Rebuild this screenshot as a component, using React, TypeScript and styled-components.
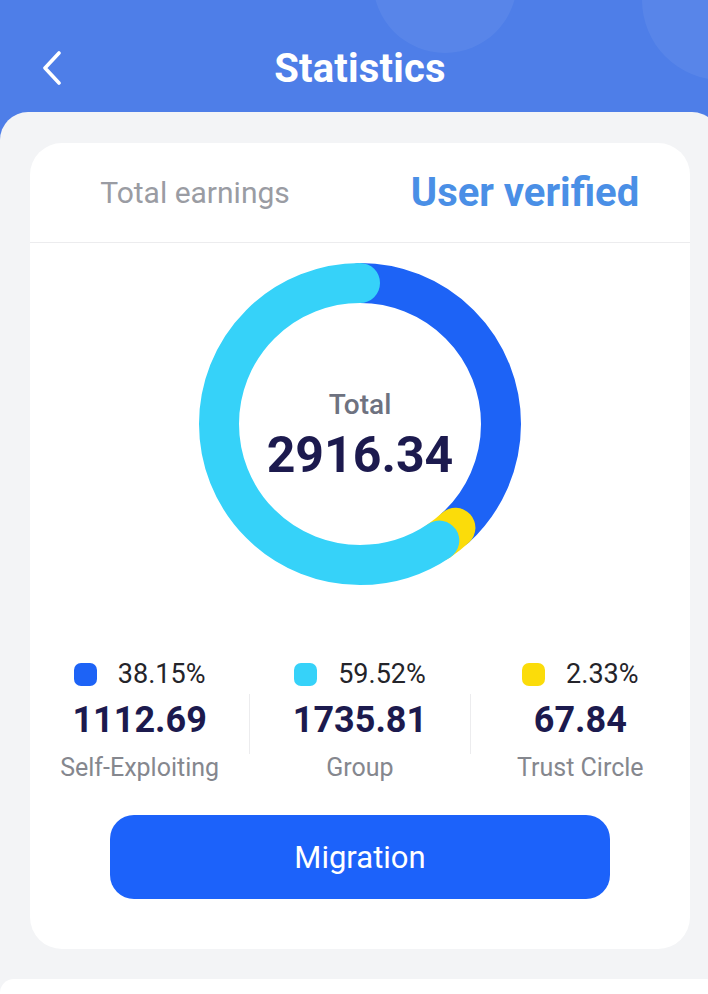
import React from 'react';
import styled, { createGlobalStyle } from 'styled-components';

const GlobalStyle = createGlobalStyle`
  html, body {
    margin: 0;
    padding: 0;
    overflow: hidden;
  }
  body {
    font-family: Roboto, "Noto Sans", Arial, sans-serif;
    -webkit-font-smoothing: antialiased;
  }
  * {
    box-sizing: border-box;
  }
`;

interface Share {
  label: string;
  amount: string;
  percent: number;
  color: string;
}

// order is the order of the arcs round the ring, clockwise from the top
const RING: Share[] = [
  { label: 'Self-Exploiting', amount: '1112.69', percent: 38.15, color: '#1d63f6' },
  { label: 'Trust Circle', amount: '67.84', percent: 2.33, color: '#fbdc0a' },
  { label: 'Group', amount: '1735.81', percent: 59.52, color: '#36d2f9' },
];

const LEGEND = [RING[0], RING[2], RING[1]];

// screen is laid out for a 720 wide phone
const Page = styled.div`
  width: 720px;
  min-height: 994px;
  background-color: #4e7ee8;
  display: flex;
  flex-direction: column;
`;

const Header = styled.header`
  position: relative;
  height: 112px;
  padding-top: 24px;
  overflow: hidden;
`;

const Bubble = styled.span<{ $x: number; $y: number; $r: number }>`
  position: absolute;
  left: ${({ $x, $r }) => $x - $r}px;
  top: ${({ $y, $r }) => $y - $r}px;
  width: ${({ $r }) => $r * 2}px;
  height: ${({ $r }) => $r * 2}px;
  border-radius: 50%;
  background-color: rgba(255, 255, 255, 0.06);
`;

const TitleBar = styled.div`
  position: relative;
  height: 88px;
  display: flex;
  align-items: center;
  justify-content: center;
`;

const BackButton = styled.button`
  position: absolute;
  left: 36px;
  top: 50%;
  transform: translateY(-50%);
  width: 32px;
  height: 40px;
  padding: 0;
  border: none;
  background: none;
  display: flex;
  align-items: center;
  justify-content: center;
  cursor: pointer;
`;

const Title = styled.h1`
  margin: 0;
  color: #fff;
  font-size: 40px;
  font-weight: 700;
  letter-spacing: 0.2px;
`;

const Panel = styled.main`
  flex: 1;
  background-color: #f3f4f6;
  border-radius: 28px 28px 0 0;
  padding: 31px 30px 0;
  display: flex;
  flex-direction: column;
  gap: 30px;
`;

const Card = styled.section`
  background-color: #fff;
  border-radius: 32px;
  padding-bottom: 50px;
  display: flex;
  flex-direction: column;
  align-items: center;
`;

const Tabs = styled.div`
  width: 100%;
  height: 100px;
  display: flex;
  align-items: center;
  border-bottom: 1px solid #ececee;
`;

const Tab = styled.div<{ $active?: boolean }>`
  flex: 1;
  text-align: center;
  font-size: ${({ $active }) => ($active ? '40px' : '30px')};
  font-weight: ${({ $active }) => ($active ? 700 : 400)};
  color: ${({ $active }) => ($active ? '#4a8fe6' : '#9a9ca3')};
`;

const Donut = styled.div`
  position: relative;
  width: 322px;
  height: 322px;
  margin-top: 20px;
`;

const DonutCenter = styled.div`
  position: absolute;
  inset: 0;
  padding-top: 24px;
  display: flex;
  flex-direction: column;
  align-items: center;
  justify-content: center;
  gap: 6px;
`;

const TotalLabel = styled.div`
  font-size: 28px;
  line-height: 32px;
  font-weight: 500;
  color: #6e7280;
`;

const TotalValue = styled.div`
  font-size: 50px;
  line-height: 56px;
  font-weight: 700;
  color: #1c1a4e;
`;

const Legend = styled.div`
  width: 100%;
  margin-top: 74px;
  display: grid;
  grid-template-columns: 1fr 1px 1fr 1px 1fr;
  align-items: center;
`;

const LegendItem = styled.div`
  display: flex;
  flex-direction: column;
  align-items: center;
`;

const LegendDivider = styled.div`
  width: 1px;
  height: 60px;
  margin-top: 6px;
  background-color: #ececee;
`;

const PercentRow = styled.div`
  height: 30px;
  display: flex;
  align-items: center;
  gap: 21px;
  font-size: 27px;
  color: #24242a;
`;

const Swatch = styled.span<{ $color: string }>`
  width: 23px;
  height: 23px;
  border-radius: 7px;
  background-color: ${({ $color }) => $color};
`;

const Amount = styled.div`
  margin-top: 10px;
  font-size: 36px;
  line-height: 42px;
  font-weight: 700;
  color: #1c1a4e;
`;

const ShareName = styled.div`
  margin-top: 13px;
  font-size: 25px;
  line-height: 28px;
  color: #85878e;
`;

const MigrateButton = styled.button`
  margin-top: 33px;
  width: 500px;
  height: 84px;
  border: none;
  border-radius: 24px;
  background-color: #1c62fa;
  color: #fff;
  font-family: inherit;
  font-size: 31px;
  cursor: pointer;
`;

const Sheet = styled.div`
  height: 40px;
  margin: 0 -30px;
  background-color: #fff;
  border-radius: 14px 14px 0 0;
`;

const R = 141;
const C = 2 * Math.PI * R;

function Ring() {
  let start = 0;
  return (
    <svg width="322" height="322" viewBox="0 0 322 322">
      {RING.map((s) => {
        const len = (s.percent / 100) * C;
        const arc = (
          <circle
            key={s.label}
            cx="161"
            cy="161"
            r={R}
            fill="none"
            stroke={s.color}
            strokeWidth="40"
            strokeLinecap="round"
            strokeDasharray={`${len} ${C}`}
            strokeDashoffset={-start}
            transform="rotate(-90 161 161)"
          />
        );
        start += len;
        return arc;
      })}
    </svg>
  );
}

export default function App() {
  return (
    <>
      <GlobalStyle />
      <Page>
        <Header>
          <Bubble $x={445} $y={-19} $r={72} />
          <Bubble $x={722} $y={0} $r={80} />
          <TitleBar>
            <BackButton aria-label="Back">
              <svg width="22" height="34" viewBox="0 0 22 34" fill="none">
                <path
                  d="M18 2 L4 17 L18 32"
                  stroke="#fff"
                  strokeWidth="3.6"
                  strokeLinecap="round"
                  strokeLinejoin="round"
                />
              </svg>
            </BackButton>
            <Title>Statistics</Title>
          </TitleBar>
        </Header>

        <Panel>
          <Card>
            <Tabs>
              <Tab>Total earnings</Tab>
              <Tab $active>User verified</Tab>
            </Tabs>

            <Donut>
              <Ring />
              <DonutCenter>
                <TotalLabel>Total</TotalLabel>
                <TotalValue>2916.34</TotalValue>
              </DonutCenter>
            </Donut>

            <Legend>
              {LEGEND.map((s, i) => (
                <React.Fragment key={s.label}>
                  {i > 0 && <LegendDivider />}
                  <LegendItem>
                    <PercentRow>
                      <Swatch $color={s.color} />
                      {s.percent.toFixed(2)}%
                    </PercentRow>
                    <Amount>{s.amount}</Amount>
                    <ShareName>{s.label}</ShareName>
                  </LegendItem>
                </React.Fragment>
              ))}
            </Legend>

            <MigrateButton>Migration</MigrateButton>
          </Card>
          <Sheet />
        </Panel>
      </Page>
    </>
  );
}
